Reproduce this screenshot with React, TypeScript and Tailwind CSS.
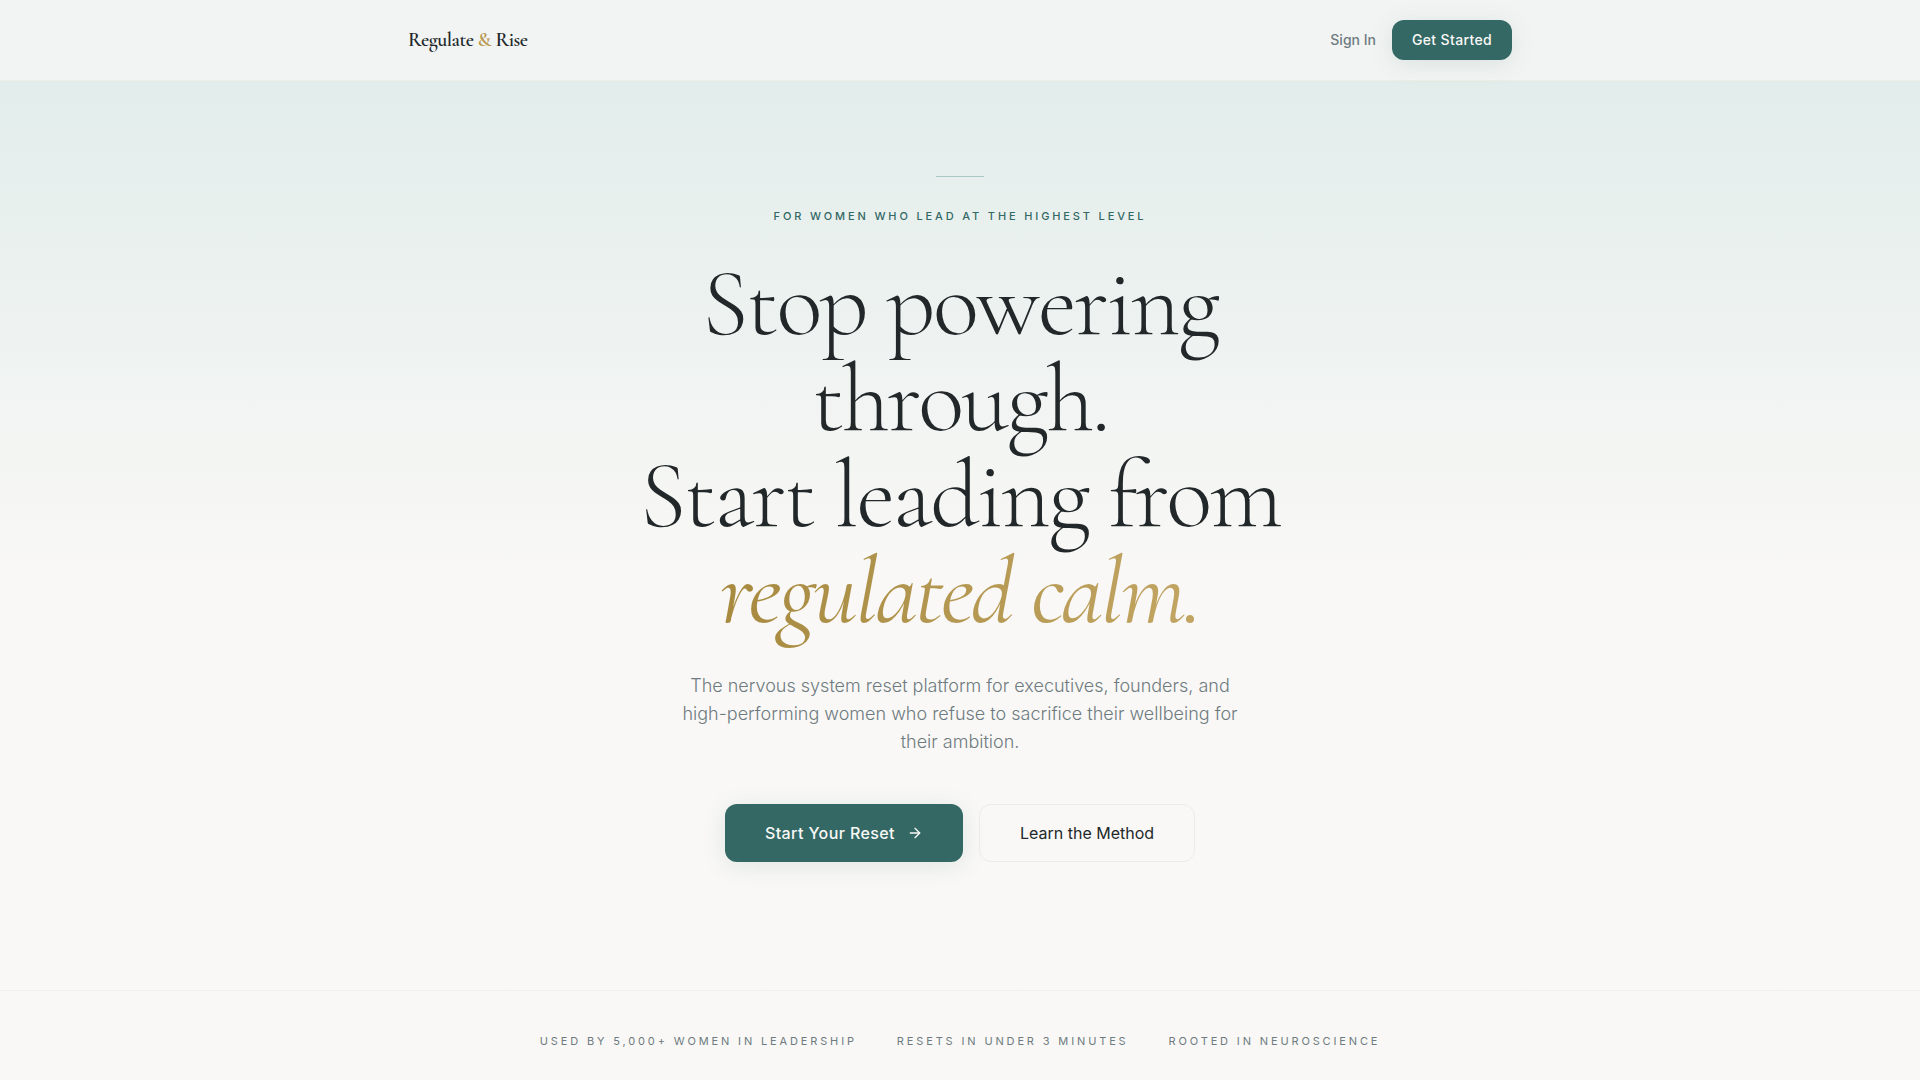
import { ArrowRight } from "lucide-react";

const highlights = [
  "Used by 5,000+ women in leadership",
  "Resets in under 3 minutes",
  "Rooted in neuroscience",
];

function Header() {
  return (
    <header className="border-b border-[#efeee6] bg-[#f2f4f3]">
      <nav className="mx-auto flex h-20 max-w-6xl items-center justify-between px-6">
        <a
          href="#"
          className="font-['Cormorant_Garamond','Liberation_Serif',serif] text-xl font-semibold tracking-tight text-[#22282a]"
        >
          Regulate <span className="text-[#b8984f]">&amp;</span> Rise
        </a>
        <div className="flex items-center gap-4">
          <a href="#" className="text-sm font-medium text-[#6e7b80]">
            Sign In
          </a>
          <button
            type="button"
            className="h-10 rounded-xl bg-[#336865] px-5 text-sm font-medium tracking-wide text-[#f9f8f6] shadow-[0_4px_24px_rgba(51,104,101,0.12)]"
          >
            Get Started
          </button>
        </div>
      </nav>
    </header>
  );
}

function Hero() {
  return (
    <section className="flex flex-col items-center bg-linear-to-b from-[#e2edeb] to-[#f9f8f6] to-[500px] px-6 pt-[95px] pb-32 text-center">
      <div className="h-px w-12 bg-[#a9c8c4]" />
      <p className="mt-8 text-[11px] leading-[15px] font-medium tracking-[0.26em] text-[#336865] uppercase">
        For women who lead at the highest level
      </p>
      <h1 className="mt-8 max-w-3xl font-['Cormorant_Garamond','Liberation_Serif',serif] text-8xl leading-none font-light tracking-tight text-[#22282a]">
        Stop powering through.
        <br />
        Start leading from
        <br />
        <em className="bg-linear-to-r from-[#a78a3f] to-[#c2a562] bg-clip-text font-normal text-transparent">
          regulated calm.
        </em>
      </h1>
      <p className="mt-8 max-w-xl text-lg leading-7 font-light text-[#6e7b80]">
        The nervous system reset platform for executives, founders, and
        high-performing women who refuse to sacrifice their wellbeing for their
        ambition.
      </p>
      <div className="mt-12 flex flex-wrap justify-center gap-4">
        <button
          type="button"
          className="flex h-[58px] items-center gap-3 rounded-xl bg-[#336865] px-10 font-medium tracking-wide text-[#f9f8f6] shadow-[0_4px_24px_rgba(51,104,101,0.12)]"
        >
          Start Your Reset
          <ArrowRight className="size-4" />
        </button>
        <button
          type="button"
          className="h-[58px] rounded-xl border border-[#ecebe9] px-10 text-[#22282a]"
        >
          Learn the Method
        </button>
      </div>
    </section>
  );
}

function Highlights() {
  return (
    <section className="border-t border-[#f0efed] px-6 py-10">
      <ul className="flex flex-wrap items-center justify-center gap-x-10 gap-y-4">
        {highlights.map((item) => (
          <li
            key={item}
            className="text-[11px] leading-5 tracking-[0.26em] text-[#6e7b80] uppercase"
          >
            {item}
          </li>
        ))}
      </ul>
    </section>
  );
}

export default function App() {
  return (
    <div className="min-h-screen bg-[#f9f8f6] font-['Inter',sans-serif]">
      <Header />
      <main>
        <Hero />
        <Highlights />
      </main>
    </div>
  );
}
